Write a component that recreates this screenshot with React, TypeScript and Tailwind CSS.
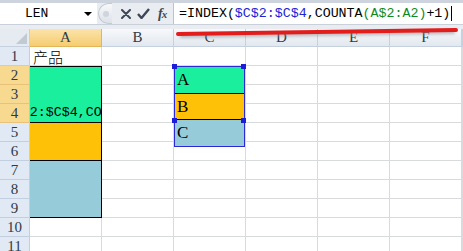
import React from "react";

const COLS = ["A", "B", "C", "D", "E", "F"];
const ROWS = [1, 2, 3, 4, 5, 6, 7, 8, 9, 10, 11];

const serif = "font-['Liberation_Serif','Times_New_Roman',serif]";
const mono = "font-['Liberation_Mono','Courier_New',monospace]";

function FormulaText() {
  return (
    <>
      <span>=INDEX(</span>
      <span className="text-[#2323d6]">$C$2:$C$4</span>
      <span>,COUNTA</span>
      <span className="text-[#0f8a1e]">(A$2:A2)</span>
      <span>+1)</span>
    </>
  );
}

function FormulaBar() {
  return (
    <div className="flex h-[29px] flex-col bg-[#e9edf2]">
      <div className="h-[3px] bg-[#cdd4de]" />
      <div className="flex h-[21px] items-stretch">
        <div className="flex w-[97px] items-center justify-between bg-white pl-[25px] pr-[5px]">
          <span className={`${mono} text-[13px] text-black`}>LEN</span>
          <span className="h-0 w-0 border-x-[4px] border-t-[4px] border-x-transparent border-t-black" />
        </div>
        <div className="ml-[1px] flex w-[14px] items-center justify-center rounded-l-full border border-r-0 border-[#c3cad4] bg-gradient-to-b from-[#f7f8fa] to-[#dde2e9]">
          <span className="h-[6px] w-[6px] rounded-full bg-[#cfd5dd]" />
        </div>
        <div className="flex flex-1 items-center pl-[9px]">
          <svg width="10" height="10" viewBox="0 0 10 10" className="mr-[6px]">
            <path d="M1 1 L9 9 M9 1 L1 9" stroke="#3d4756" strokeWidth="2" strokeLinecap="round" />
          </svg>
          <svg width="13" height="11" viewBox="0 0 13 11" className="mr-[8px]">
            <path d="M1 6 L4.5 10 L12 1" stroke="#3d4756" strokeWidth="2.4" fill="none" strokeLinejoin="round" />
          </svg>
          <span className={`${serif} text-[14px] italic font-bold text-[#3d4756] tracking-[-1px]`}>
            f<span className="text-[11px]">x</span>
          </span>
        </div>
        <div
          className={`${mono} flex w-[290px] items-center whitespace-nowrap border-l border-[#b9c2cd] bg-white pl-[5px] text-[13.3px] text-black`}
        >
          <FormulaText />
          <span className="ml-[1px] h-[15px] w-[1px] bg-black" />
        </div>
      </div>
      <div className="flex-1 border-t border-[#c9d0d9]" />
    </div>
  );
}

function ColHeader({ label, active }: { label: string; active?: boolean }) {
  return (
    <div
      className={`${serif} flex items-center justify-center border-b border-r text-[15px] text-[#2f3a48] ${
        active
          ? "border-[#e3b55a] bg-gradient-to-b from-[#fbe3a8] to-[#f6cd70]"
          : "border-[#c5d1de] bg-gradient-to-b from-[#f7f9fb] to-[#e2e8ef]"
      }`}
    >
      {label}
    </div>
  );
}

function RowHeader({ n, active }: { n: number; active?: boolean }) {
  return (
    <div
      className={`${serif} flex items-center justify-center border-b border-r text-[15px] text-[#2f3a48] ${
        active ? "border-[#e8c27a] bg-[#f8d990]" : "border-[#c2cfe0] bg-[#e1e9f5]"
      }`}
    >
      {n}
    </div>
  );
}

function Cell({ children }: { children?: React.ReactNode }) {
  return <div className="border-b border-r border-[#d8dadd] bg-white">{children}</div>;
}

function Corner() {
  return (
    <div className="flex items-end justify-end border-b border-r border-[#c5d1de] bg-[#e6ebf1] p-[2px]">
      <span className="h-0 w-0 border-b-[11px] border-l-[11px] border-b-[#c1c9d3] border-l-transparent" />
    </div>
  );
}

function Handle({ pos }: { pos: string }) {
  return <span className={`absolute h-[5px] w-[5px] bg-[#1c1cd9] ${pos}`} />;
}

function RefBlock() {
  const items = [
    { t: "A", c: "bg-[#19ef9c]" },
    { t: "B", c: "bg-[#ffc107]" },
    { t: "C", c: "bg-[#96ccd9]" },
  ];
  return (
    <div className="relative row-span-3 flex flex-col border-b border-r border-[#d8dadd]">
      <div className="flex flex-1 flex-col border border-[#2a2ad4]">
        {items.map((it, i) => (
          <div
            key={it.t}
            className={`${serif} flex flex-1 items-center pl-[2px] text-[17px] text-black ${it.c} ${
              i < 2 ? "border-b border-black" : ""
            }`}
          >
            {it.t}
          </div>
        ))}
      </div>
      <Handle pos="-left-[2px] -top-[2px]" />
      <Handle pos="-right-[1px] -top-[2px]" />
      <Handle pos="-left-[2px] bottom-[-1px]" />
      <Handle pos="-right-[1px] bottom-[-1px]" />
    </div>
  );
}

function Sheet() {
  const cells: React.ReactNode[] = [];
  cells.push(<Corner key="corner" />);
  COLS.forEach((c) => cells.push(<ColHeader key={`h${c}`} label={c} active={c === "A"} />));
  cells.push(<ColHeader key="hG" label="" />);

  ROWS.forEach((r) => {
    cells.push(<RowHeader key={`r${r}`} n={r} active={r >= 2 && r <= 4} />);
    COLS.forEach((c) => {
      const k = `${c}${r}`;
      if (c === "A") {
        if (r === 1) {
          cells.push(
            <Cell key={k}>
              <div className="pl-[3px] pt-[1px] font-['Noto_Sans_CJK_SC',sans-serif] text-[15px] leading-[18px] font-light text-black">
                产品
              </div>
            </Cell>
          );
        } else if (r === 2) {
          cells.push(
            <div
              key={k}
              className="row-span-3 flex items-end overflow-hidden border-y border-r border-black bg-[#19ef9c]"
            >
              <span className={`${mono} ml-[-80px] whitespace-nowrap text-[13.3px] leading-[18px] text-black`}>
                =INDEX($C$2:$C$4,COUNTA(A$2:A2)+1)
              </span>
            </div>
          );
        } else if (r === 5) {
          cells.push(<div key={k} className="row-span-2 border-b border-r border-black bg-[#ffc107]" />);
        } else if (r === 7) {
          cells.push(<div key={k} className="row-span-3 border-b border-r border-black bg-[#96ccd9]" />);
        } else if (r >= 10) {
          cells.push(<Cell key={k} />);
        }
      } else if (c === "C") {
        if (r === 2) cells.push(<RefBlock key={k} />);
        else if (r < 2 || r > 4) cells.push(<Cell key={k} />);
      } else {
        cells.push(<Cell key={k} />);
      }
    });
    cells.push(<Cell key={`G${r}`} />);
  });

  return (
    <div className="grid grid-cols-[30px_repeat(6,72px)_1fr] grid-rows-[18px_repeat(11,19px)]">{cells}</div>
  );
}

export default function App() {
  return (
    <div className="relative h-[251px] w-[463px] overflow-hidden bg-white">
      <FormulaBar />
      <Sheet />
      {/* red hand-drawn underline */}
      <svg className="pointer-events-none absolute left-0 top-0" width="463" height="45">
        <defs>
          <filter id="blur" x="-10%" y="-200%" width="120%" height="500%">
            <feGaussianBlur stdDeviation="1.6" />
          </filter>
        </defs>
        <path d="M180 36 Q 320 34 455 32" stroke="#8a8f96" strokeWidth="4" fill="none" opacity="0.55" filter="url(#blur)" />
        <path d="M178 34 Q 320 32 456 30" stroke="#e31c1c" strokeWidth="4" fill="none" strokeLinecap="round" />
      </svg>
    </div>
  );
}
